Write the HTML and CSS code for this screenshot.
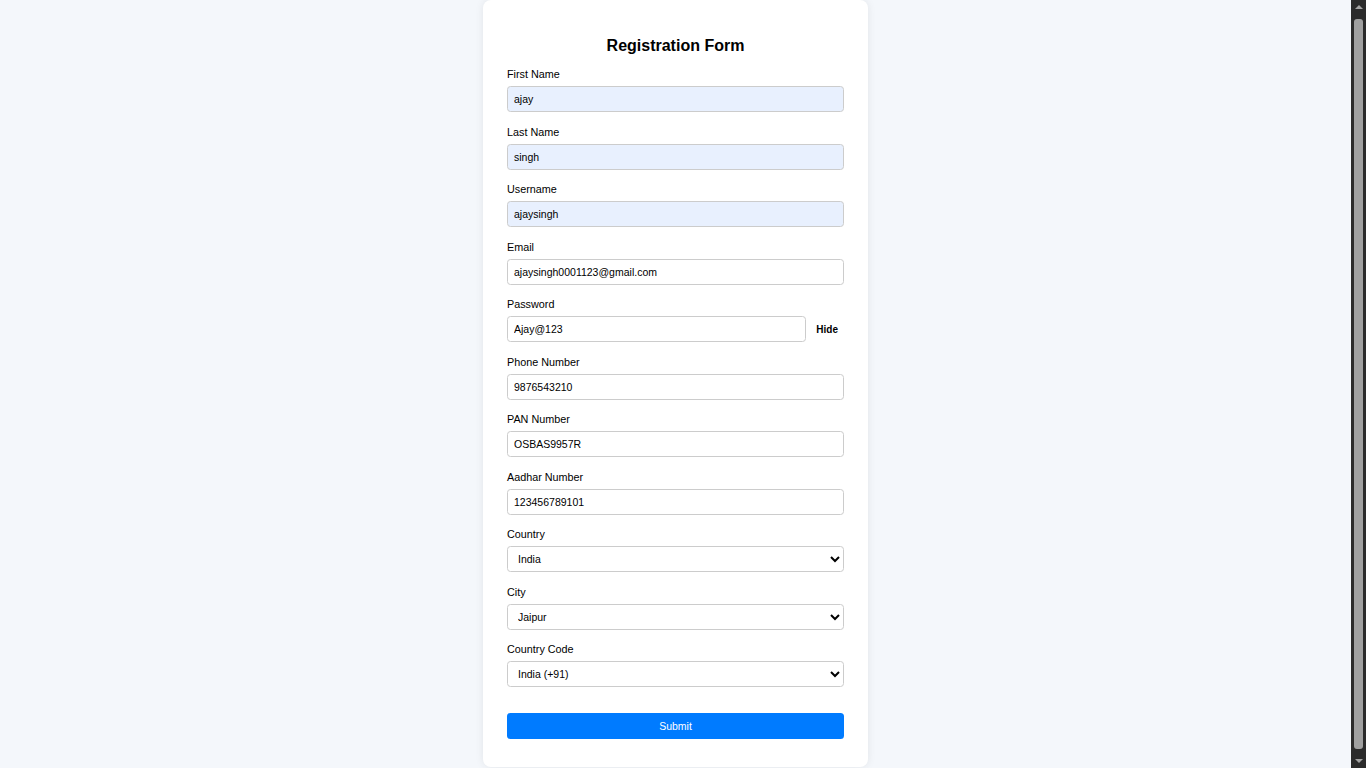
FILE: index.html
```html
<!DOCTYPE html>
<html lang="en">
<head>
<meta charset="utf-8">
<title>Registration Form</title>
<link rel="stylesheet" href="styles.css">
</head>
<body>
<div class="page">
  <form class="card">
    <h2 class="title">Registration Form</h2>

    <div class="group">
      <label class="label">First Name</label>
      <input class="field autofill" type="text" value="ajay">
    </div>
    <div class="group">
      <label class="label">Last Name</label>
      <input class="field autofill" type="text" value="singh">
    </div>
    <div class="group">
      <label class="label">Username</label>
      <input class="field autofill" type="text" value="ajaysingh">
    </div>
    <div class="group">
      <label class="label">Email</label>
      <input class="field" type="text" value="ajaysingh0001123@gmail.com">
    </div>
    <div class="group">
      <label class="label">Password</label>
      <div class="pw-row">
        <input class="field pw" type="text" value="Ajay@123">
        <button type="button" class="toggle">Hide</button>
      </div>
    </div>
    <div class="group">
      <label class="label">Phone Number</label>
      <input class="field" type="text" value="9876543210">
    </div>
    <div class="group">
      <label class="label">PAN Number</label>
      <input class="field" type="text" value="OSBAS9957R">
    </div>
    <div class="group">
      <label class="label">Aadhar Number</label>
      <input class="field" type="text" value="123456789101">
    </div>
    <div class="group">
      <label class="label">Country</label>
      <select class="field select">
        <option>India</option>
      </select>
    </div>
    <div class="group">
      <label class="label">City</label>
      <select class="field select">
        <option>Jaipur</option>
      </select>
    </div>
    <div class="group">
      <label class="label">Country Code</label>
      <select class="field select">
        <option>India (+91)</option>
      </select>
    </div>

    <button type="button" class="submit">Submit</button>
  </form>
</div>

<div class="scrollbar" aria-hidden="true">
  <div class="arrow arrow-up"></div>
  <div class="thumb"></div>
  <div class="arrow arrow-down"></div>
</div>
</body>
</html>
```

FILE: styles.css
```css
html {
  background: #f4f7fb;
}

body {
  margin: 0;
  background: #f4f7fb;
  font-family: "Liberation Sans", Arial, sans-serif;
  color: #000;
}

.page {
  width: calc(100% - 15px);
  display: flex;
  justify-content: center;
  padding-bottom: 10px;
}

.card {
  width: 385px;
  box-sizing: border-box;
  padding: 24px 24px 28px;
  background: #ffffff;
  border-radius: 8px;
  box-shadow: 0 0 8px rgba(0, 0, 0, 0.08);
  display: flex;
  flex-direction: column;
}

.title {
  margin: 13px 0 13px;
  font-size: 16px;
  line-height: 18px;
  font-weight: bold;
  text-align: center;
  color: #000;
}

.group {
  display: flex;
  flex-direction: column;
  margin-bottom: 13.5px;
}

.label {
  font-size: 10.8px;
  line-height: 12px;
  margin-bottom: 6px;
  color: #000;
}

.field {
  box-sizing: border-box;
  width: 100%;
  height: 26px;
  padding: 0 6px;
  border: 1px solid #cccccc;
  border-radius: 3.5px;
  background: #ffffff;
  font-family: "Liberation Sans", Arial, sans-serif;
  font-size: 10.5px;
  color: #000;
  outline: none;
  margin: 0;
}

.autofill {
  background: #e8f0fe;
}

.select {
  padding: 0 6px;
}

.pw-row {
  display: flex;
  align-items: center;
  gap: 4px;
}

.pw {
  flex: 1;
  width: auto;
  min-width: 0;
}

.toggle {
  border: none;
  background: none;
  padding: 0 6px;
  font-family: "Liberation Sans", Arial, sans-serif;
  font-size: 10px;
  font-weight: bold;
  color: #000;
  cursor: pointer;
}

.submit {
  margin-top: 12.5px;
  height: 26px;
  border: none;
  border-radius: 3.5px;
  background: #007bff;
  color: #ffffff;
  font-family: "Liberation Sans", Arial, sans-serif;
  font-size: 10.5px;
  cursor: pointer;
}

/* imitation of the browser's dark scrollbar */
.scrollbar {
  position: fixed;
  top: 0;
  right: 0;
  width: 15px;
  height: 100vh;
  background: #2b2b2b;
  display: flex;
  flex-direction: column;
  align-items: center;
}

.arrow {
  width: 0;
  height: 0;
  border-left: 4px solid transparent;
  border-right: 4px solid transparent;
}

.arrow-up {
  margin-top: 5px;
  border-bottom: 4px solid #a3a3a3;
}

.arrow-down {
  margin-bottom: 5px;
  border-top: 4px solid #a3a3a3;
}

.thumb {
  flex: 1;
  width: 9px;
  margin: 10px 0 10px;
  background: #a0a0a0;
  border-radius: 3px;
}
```
